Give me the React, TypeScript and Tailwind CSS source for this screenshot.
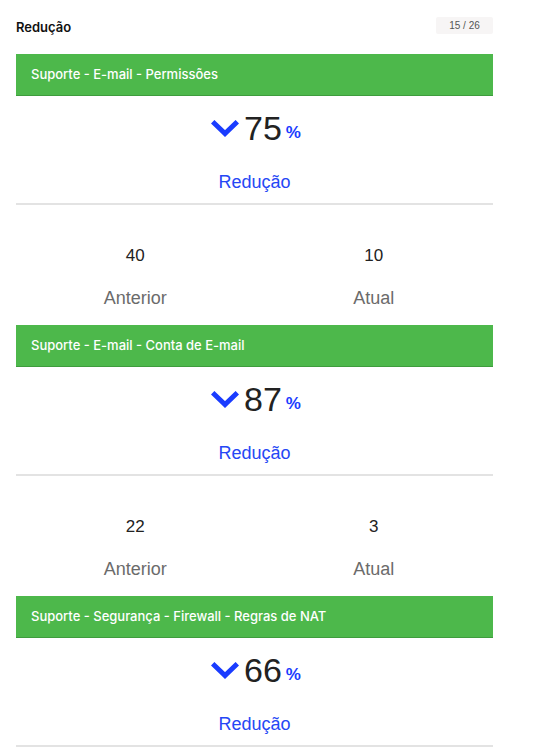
import React from "react";

interface Item {
  title: string;
  percent: number;
  before: number;
  after: number;
}

const items: Item[] = [
  { title: "Suporte - E-mail - Permissões", percent: 75, before: 40, after: 10 },
  { title: "Suporte - E-mail - Conta de E-mail", percent: 87, before: 22, after: 3 },
  { title: "Suporte - Segurança - Firewall - Regras de NAT", percent: 66, before: 0, after: 0 },
];

const Chevron = () => (
  <svg width="28" height="18" viewBox="0 0 28 18" className="mr-[5px] ml-[3px] mt-[2px]">
    <polyline
      points="3.5,3.5 14,13.5 24.5,3.5"
      fill="none"
      stroke="#1a3cff"
      strokeWidth="5"
      strokeLinecap="square"
    />
  </svg>
);

const Section = ({ item, last }: { item: Item; last?: boolean }) => {
  return (
    <div>
      <div className="h-[42px] bg-[#4db84b] border-b border-[#3e9c3d] flex items-center px-[15px] text-white text-[13px] font-medium font-['Inter',sans-serif]">
        {item.title}
      </div>
      <div className="flex items-center justify-center h-[64px]">
        <Chevron />
        <span className="text-[34px] leading-none text-[#222] font-['Liberation_Sans',sans-serif]">{item.percent}</span>
        <span className="text-[17px] font-bold text-[#1a3cff] ml-[4px] mt-[10px] font-['Liberation_Sans',sans-serif]">%</span>
      </div>
      <div className="text-center text-[18px] text-[#2547f5] font-['Liberation_Sans',sans-serif] leading-none pt-[13px] pb-[12px]">
        Redução
      </div>
      <div className="h-[2px] bg-[#e3e3e3]" />
      {!last && (
        <div className="grid grid-cols-2 font-['Liberation_Sans',sans-serif] pt-[42px] pb-[18px]">
          <div className="flex flex-col items-center">
            <span className="text-[17px] text-[#222] leading-none">{item.before}</span>
            <span className="text-[18px] text-[#6b6b6b] leading-none mt-[25px]">Anterior</span>
          </div>
          <div className="flex flex-col items-center">
            <span className="text-[17px] text-[#222] leading-none">{item.after}</span>
            <span className="text-[18px] text-[#6b6b6b] leading-none mt-[25px]">Atual</span>
          </div>
        </div>
      )}
    </div>
  );
};

export default function App() {
  return (
    <div className="w-[546px] h-[752px] bg-white overflow-hidden">
      <div className="w-[477px] ml-[16px]">
        <div className="flex items-start justify-between pt-[17px] h-[54px]">
          <span className="text-[13px] leading-[20px] font-semibold text-[#111] font-['Inter',sans-serif]">Redução</span>
          <span className="bg-[#f7f5f5] rounded-[2px] w-[57px] h-[17px] flex items-center justify-center text-[10px] text-[#555] font-['Liberation_Sans',sans-serif]">
            15 / 26
          </span>
        </div>
        {items.map((item, i) => (
          <Section key={i} item={item} last={i === items.length - 1} />
        ))}
      </div>
    </div>
  );
}
